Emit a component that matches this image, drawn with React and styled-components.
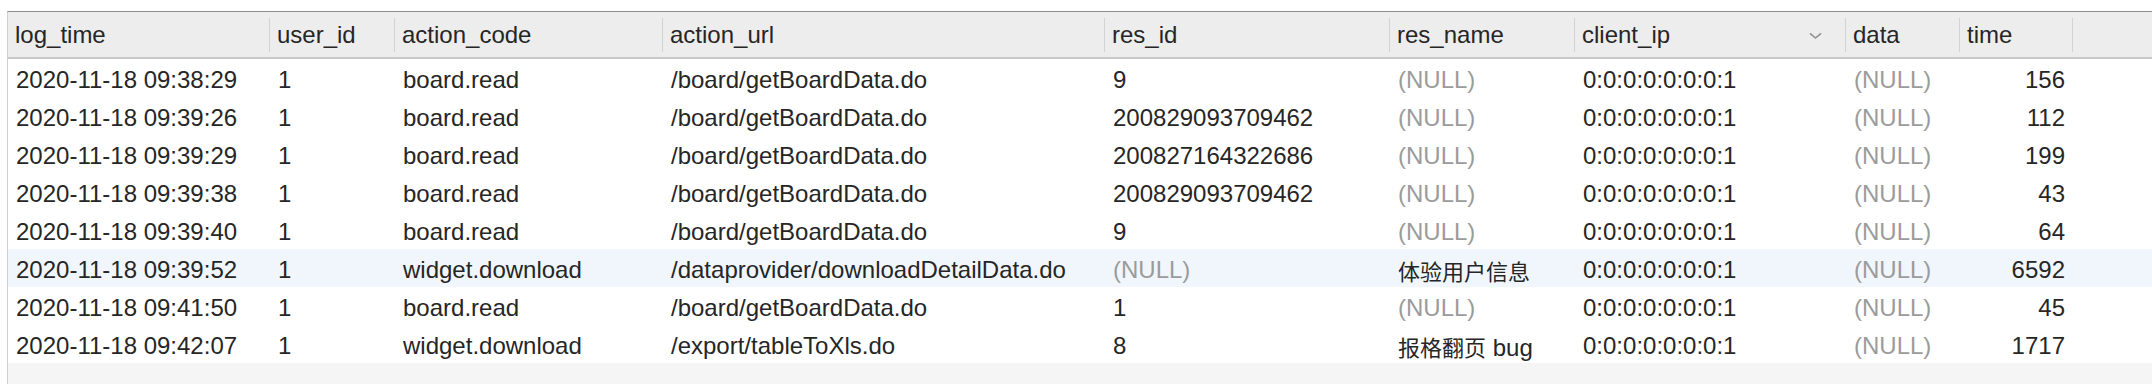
import React from 'react';
import styled, { createGlobalStyle } from 'styled-components';

const GlobalStyle = createGlobalStyle`
  html, body {
    margin: 0;
    padding: 0;
    background: #ffffff;
  }
  body {
    font-family: "Liberation Sans", Arial, "Noto Sans CJK SC", sans-serif;
    color: #262626;
    overflow: hidden;
  }
`;

const columns = [
  { key: 'log_time', width: 262 },
  { key: 'user_id', width: 125 },
  { key: 'action_code', width: 268 },
  { key: 'action_url', width: 442 },
  { key: 'res_id', width: 285 },
  { key: 'res_name', width: 185 },
  { key: 'client_ip', width: 271, sorted: true },
  { key: 'data', width: 114 },
  { key: 'time', width: 113, right: true },
];

const template = columns.map((c) => `${c.width}px`).join(' ') + ' 1fr';

const N = null;
const rows = [
  ['2020-11-18 09:38:29', '1', 'board.read', '/board/getBoardData.do', '9', N, '0:0:0:0:0:0:0:1', N, '156'],
  ['2020-11-18 09:39:26', '1', 'board.read', '/board/getBoardData.do', '200829093709462', N, '0:0:0:0:0:0:0:1', N, '112'],
  ['2020-11-18 09:39:29', '1', 'board.read', '/board/getBoardData.do', '200827164322686', N, '0:0:0:0:0:0:0:1', N, '199'],
  ['2020-11-18 09:39:38', '1', 'board.read', '/board/getBoardData.do', '200829093709462', N, '0:0:0:0:0:0:0:1', N, '43'],
  ['2020-11-18 09:39:40', '1', 'board.read', '/board/getBoardData.do', '9', N, '0:0:0:0:0:0:0:1', N, '64'],
  ['2020-11-18 09:39:52', '1', 'widget.download', '/dataprovider/downloadDetailData.do', N, '体验用户信息', '0:0:0:0:0:0:0:1', N, '6592'],
  ['2020-11-18 09:41:50', '1', 'board.read', '/board/getBoardData.do', '1', N, '0:0:0:0:0:0:0:1', N, '45'],
  ['2020-11-18 09:42:07', '1', 'widget.download', '/export/tableToXls.do', '8', '报格翻页 bug', '0:0:0:0:0:0:0:1', N, '1717'],
];

const Page = styled.div`
  padding-top: 11px;
  height: 384px;
  box-sizing: border-box;
  display: flex;
  flex-direction: column;
`;

const Grid = styled.div`
  flex: 1;
  display: flex;
  flex-direction: column;
  margin-left: 7px;
  border-top: 1px solid #8c8c8c;
  border-left: 1px solid #cfcfcf;
  background: #f5f5f5;
`;

const HeaderRow = styled.div`
  display: grid;
  grid-template-columns: ${template};
  height: 45px;
  background: #ededed;
  border-bottom: 2px solid #c9c9c9;
`;

const HeadCell = styled.div`
  position: relative;
  display: flex;
  align-items: center;
  padding: 0 8px 0 7px;
  font-size: 24px;
  color: #262626;
  white-space: nowrap;

  &::after {
    content: '';
    position: absolute;
    right: 0;
    top: 6px;
    bottom: 5px;
    width: 1px;
    background: #d3d3d3;
  }
`;

const HeadLabel = styled.span`
  flex: 1;
`;

const Chevron = styled.svg`
  width: 13px;
  height: 8px;
  margin-right: 16px;
  margin-top: 2px;
`;

const Body = styled.div`
  display: flex;
  flex-direction: column;
`;

const Row = styled.div`
  display: grid;
  grid-template-columns: ${template};
  height: 38px;
  background: ${(p) => (p.highlight ? '#f1f6fd' : '#ffffff')};
`;

const Cell = styled.div`
  display: flex;
  align-items: center;
  justify-content: ${(p) => (p.right ? 'flex-end' : 'flex-start')};
  padding: ${(p) => (p.right ? '4px 8px 0 0' : '4px 0 0 8px')};
  font-size: 24px;
  white-space: nowrap;
  overflow: hidden;
  color: ${(p) => (p.muted ? '#9b9b9b' : '#262626')};
`;

const Value = styled.span`
  white-space: pre;
`;

const Cjk = styled.span`
  font-family: "Noto Sans CJK SC", sans-serif;
  font-size: 22px;
`;

const renderValue = (v) => {
  if (v === null) return <Value>(NULL)</Value>;
  const m = v.match(/^([\u4e00-\u9fff]+)(.*)$/);
  if (m) {
    return (
      <Value>
        <Cjk>{m[1]}</Cjk>
        {m[2]}
      </Value>
    );
  }
  return <Value>{v}</Value>;
};

const App = () => {
  return (
    <>
      <GlobalStyle />
      <Page>
        <Grid>
          <HeaderRow>
            {columns.map((c) => (
              <HeadCell key={c.key}>
                <HeadLabel>{c.key}</HeadLabel>
                {c.sorted && (
                  <Chevron viewBox="0 0 13 8">
                    <path d="M1.5 1.8 L6.5 6 L11.5 1.8" fill="none" stroke="#8e8e8e" strokeWidth="1.6" strokeLinecap="round" strokeLinejoin="round" />
                  </Chevron>
                )}
              </HeadCell>
            ))}
            <div />
          </HeaderRow>
          <Body>
            {rows.map((r, i) => (
              <Row key={i} highlight={i === 5}>
                {r.map((v, j) => (
                  <Cell key={j} muted={v === null} right={columns[j].right}>
                    {renderValue(v)}
                  </Cell>
                ))}
                <div />
              </Row>
            ))}
          </Body>
        </Grid>
      </Page>
    </>
  );
};

export default App;
